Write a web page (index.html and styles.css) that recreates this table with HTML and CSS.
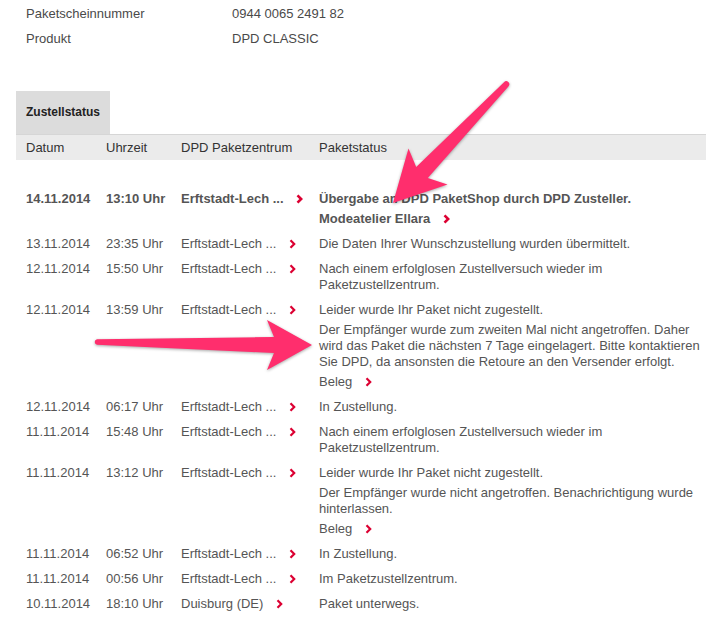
FILE: index.html
```html
<!DOCTYPE html>
<html lang="de">
<head>
<meta charset="utf-8">
<title>Zustellstatus</title>
<link rel="stylesheet" href="styles.css">
</head>
<body>
<div class="page">
  <div class="info">
    <div class="info-row"><span>Paketscheinnummer</span><span>0944 0065 2491 82</span></div>
    <div class="info-row"><span>Produkt</span><span>DPD CLASSIC</span></div>
  </div>

  <div class="tabs"><div class="tab">Zustellstatus</div></div>

  <div class="table">
    <div class="row thead">
      <div class="cell">Datum</div>
      <div class="cell">Uhrzeit</div>
      <div class="cell">DPD Paketzentrum</div>
      <div class="cell">Paketstatus</div>
    </div>
    <div class="tbody">
      <div class="row strong">
        <div class="cell">14.11.2014</div>
        <div class="cell">13:10 Uhr</div>
        <div class="cell">Erftstadt-Lech ... <svg class="chev" viewBox="0 0 7 10"><polyline points="1.5,1.3 5.2,5 1.5,8.7"/></svg></div>
        <div class="cell status">
          <div class="line">Übergabe an DPD PaketShop durch DPD Zusteller.</div>
          <div class="line">Modeatelier Ellara <svg class="chev" viewBox="0 0 7 10"><polyline points="1.5,1.3 5.2,5 1.5,8.7"/></svg></div>
        </div>
      </div>
      <div class="row">
        <div class="cell">13.11.2014</div>
        <div class="cell">23:35 Uhr</div>
        <div class="cell">Erftstadt-Lech ... <svg class="chev" viewBox="0 0 7 10"><polyline points="1.5,1.3 5.2,5 1.5,8.7"/></svg></div>
        <div class="cell status"><div class="line">Die Daten Ihrer Wunschzustellung wurden übermittelt.</div></div>
      </div>
      <div class="row">
        <div class="cell">12.11.2014</div>
        <div class="cell">15:50 Uhr</div>
        <div class="cell">Erftstadt-Lech ... <svg class="chev" viewBox="0 0 7 10"><polyline points="1.5,1.3 5.2,5 1.5,8.7"/></svg></div>
        <div class="cell status"><div class="line">Nach einem erfolglosen Zustellversuch wieder im Paketzustellzentrum.</div></div>
      </div>
      <div class="row">
        <div class="cell">12.11.2014</div>
        <div class="cell">13:59 Uhr</div>
        <div class="cell">Erftstadt-Lech ... <svg class="chev" viewBox="0 0 7 10"><polyline points="1.5,1.3 5.2,5 1.5,8.7"/></svg></div>
        <div class="cell status">
          <div class="line">Leider wurde Ihr Paket nicht zugestellt.</div>
          <div class="line">Der Empfänger wurde zum zweiten Mal nicht angetroffen. Daher wird das Paket die nächsten 7 Tage eingelagert. Bitte kontaktieren Sie DPD, da ansonsten die Retoure an den Versender erfolgt.</div>
          <div class="line">Beleg <svg class="chev" viewBox="0 0 7 10"><polyline points="1.5,1.3 5.2,5 1.5,8.7"/></svg></div>
        </div>
      </div>
      <div class="row">
        <div class="cell">12.11.2014</div>
        <div class="cell">06:17 Uhr</div>
        <div class="cell">Erftstadt-Lech ... <svg class="chev" viewBox="0 0 7 10"><polyline points="1.5,1.3 5.2,5 1.5,8.7"/></svg></div>
        <div class="cell status"><div class="line">In Zustellung.</div></div>
      </div>
      <div class="row">
        <div class="cell">11.11.2014</div>
        <div class="cell">15:48 Uhr</div>
        <div class="cell">Erftstadt-Lech ... <svg class="chev" viewBox="0 0 7 10"><polyline points="1.5,1.3 5.2,5 1.5,8.7"/></svg></div>
        <div class="cell status"><div class="line">Nach einem erfolglosen Zustellversuch wieder im Paketzustellzentrum.</div></div>
      </div>
      <div class="row">
        <div class="cell">11.11.2014</div>
        <div class="cell">13:12 Uhr</div>
        <div class="cell">Erftstadt-Lech ... <svg class="chev" viewBox="0 0 7 10"><polyline points="1.5,1.3 5.2,5 1.5,8.7"/></svg></div>
        <div class="cell status">
          <div class="line">Leider wurde Ihr Paket nicht zugestellt.</div>
          <div class="line">Der Empfänger wurde nicht angetroffen. Benachrichtigung wurde hinterlassen.</div>
          <div class="line">Beleg <svg class="chev" viewBox="0 0 7 10"><polyline points="1.5,1.3 5.2,5 1.5,8.7"/></svg></div>
        </div>
      </div>
      <div class="row">
        <div class="cell">11.11.2014</div>
        <div class="cell">06:52 Uhr</div>
        <div class="cell">Erftstadt-Lech ... <svg class="chev" viewBox="0 0 7 10"><polyline points="1.5,1.3 5.2,5 1.5,8.7"/></svg></div>
        <div class="cell status"><div class="line">In Zustellung.</div></div>
      </div>
      <div class="row">
        <div class="cell">11.11.2014</div>
        <div class="cell">00:56 Uhr</div>
        <div class="cell">Erftstadt-Lech ... <svg class="chev" viewBox="0 0 7 10"><polyline points="1.5,1.3 5.2,5 1.5,8.7"/></svg></div>
        <div class="cell status"><div class="line">Im Paketzustellzentrum.</div></div>
      </div>
      <div class="row">
        <div class="cell">10.11.2014</div>
        <div class="cell">18:10 Uhr</div>
        <div class="cell">Duisburg (DE) <svg class="chev" viewBox="0 0 7 10"><polyline points="1.5,1.3 5.2,5 1.5,8.7"/></svg></div>
        <div class="cell status"><div class="line">Paket unterwegs.</div></div>
      </div>
    </div>
  </div>

  <svg class="arrows" viewBox="0 0 720 621" width="720" height="621">
    <path d="M393,203 L408.5,148.5 L416.2,167.1 L504,82.2 A3,3 0 0 1 508.4,86.4 L427.8,178.1 L447.5,184.5 Z"/>
    <path d="M312,345 L267,320 L274,337 L97,339.3 A2.8,2.8 0 0 0 97,344.8 L274,353 L267,370 Z"/>
  </svg>
</div>
</body>
</html>
```

FILE: styles.css
```css
html, body {
  margin: 0;
  padding: 0;
  background: #ffffff;
}

body {
  font-family: "Liberation Sans", Arial, Helvetica, sans-serif;
  font-size: 13px;
  line-height: 16px;
  color: #555555;
}

.page {
  position: relative;
  width: 720px;
  height: 621px;
  overflow: hidden;
}

.info {
  padding-top: 2px;
  color: #4a4a4a;
}

.info-row {
  display: grid;
  grid-template-columns: 206px 1fr;
  padding: 4px 0 5px 26px;
}

.tabs {
  margin: 39px 0 0 16px;
  display: flex;
}

.tab {
  background: #dcdcdc;
  padding: 13px 10px 14px 10px;
  font-size: 12px;
  font-weight: bold;
  color: #222222;
}

.table {
  margin-left: 16px;
  width: 690px;
}

.row {
  display: grid;
  grid-template-columns: 80px 75px 138px 1fr;
}

.cell {
  padding: 4px 0 5px 10px;
}

.thead {
  border-top: 1px solid #d6d6d6;
  background: #ebebeb;
  color: #333333;
}

.thead .cell {
  padding: 5px 0 4px 10px;
}

.tbody {
  padding-top: 27px;
}

.strong {
  font-weight: bold;
}

.status .line + .line {
  margin-top: 4px;
}

.chev {
  width: 7px;
  height: 10px;
  margin-left: 9px;
  vertical-align: -1px;
  fill: none;
  stroke: #dc0032;
  stroke-width: 2.2;
  stroke-linecap: butt;
  stroke-linejoin: miter;
}

.strong .chev {
  stroke-width: 2.6;
}

.arrows {
  position: absolute;
  left: 0;
  top: 0;
  pointer-events: none;
}

.arrows path {
  fill: #ff2e6d;
  filter: drop-shadow(0 1px 1.5px rgba(0, 0, 0, 0.35));
}
```
